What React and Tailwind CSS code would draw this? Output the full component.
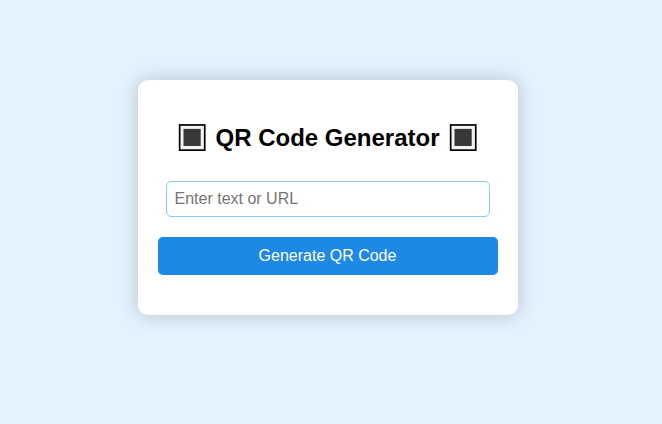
function SquareButton() {
  return (
    <svg className="h-[28px] w-[28px] shrink-0" viewBox="0 0 28 28" aria-hidden="true">
      <rect x="0.8" y="0.1" width="26.8" height="26.9" fill="#000" />
      <rect x="2.5" y="1.8" width="23.4" height="23.5" fill="#f2f2f2" />
      <rect x="5.5" y="4.9" width="17.2" height="17.1" fill="#383838" />
    </svg>
  );
}

export default function App() {
  return (
    <div className="flex h-screen flex-col items-center overflow-hidden bg-[#e3f2fd] pt-[80px] pr-[6px] font-['Liberation_Sans',Arial,sans-serif]">
      <main className="flex h-[235px] w-[380px] flex-col rounded-[10px] bg-white px-5 pt-[44px] shadow-[0_0_20px_rgba(0,0,0,0.2)]">
        <h1 className="flex h-[28px] items-center justify-center gap-[9px] pr-px text-[24px] font-bold whitespace-nowrap text-black">
          <SquareButton />
          QR Code Generator
          <SquareButton />
        </h1>
        <input
          className="mx-2 mt-[29px] h-[36px] rounded-[5px] border border-[#90caf9] pr-2 pl-[7.5px] text-base text-black outline-none placeholder:text-[#757575]"
          placeholder="Enter text or URL"
        />
        <button className="mt-5 h-[38px] rounded-[5px] bg-[#1e88e5] pr-px text-base text-white">
          Generate QR Code
        </button>
      </main>
    </div>
  );
}
